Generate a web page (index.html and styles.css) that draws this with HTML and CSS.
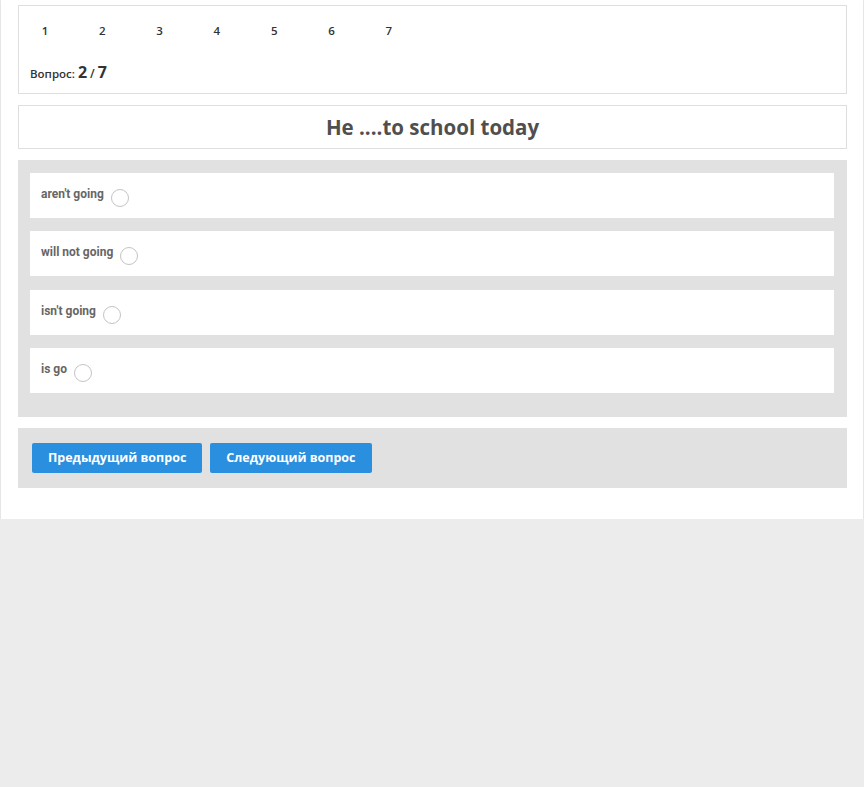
FILE: index.html
```html
<!DOCTYPE html>
<html lang="ru">

<head>
    <meta charset="UTF-8">
    <meta name="viewport" content="width=device-width, initial-scale=1.0">
    <title>Тест</title>
    <link rel="stylesheet" href="styles.css">
</head>

<body>
    <div class="panel">
        <div class="box nav-box">
            <ul class="steps">
                <li>1</li>
                <li>2</li>
                <li>3</li>
                <li>4</li>
                <li>5</li>
                <li>6</li>
                <li>7</li>
            </ul>
            <div class="counter">Вопрос: <b>2</b> <span class="slash">/</span> <b>7</b></div>
        </div>

        <div class="box question">
            <h2>He ....to school today</h2>
        </div>

        <form class="answers">
            <label class="answer">aren't going <input type="radio" name="answer"></label>
            <label class="answer">will not going <input type="radio" name="answer"></label>
            <label class="answer">isn't going <input type="radio" name="answer"></label>
            <label class="answer">is go <input type="radio" name="answer"></label>
        </form>

        <div class="controls">
            <button class="button">Предыдущий вопрос</button>
            <button class="button">Следующий вопрос</button>
        </div>
    </div>
</body>

</html>
```

FILE: styles.css
```css
/* General Page Styles */
body {
    font-family: 'Open Sans', 'Noto Sans', sans-serif;
    background-color: #ececec;
    color: #333;
    margin: 0;
    padding: 0;
}

/* White sheet */
.panel {
    background-color: #fff;
    margin: 0 1px;
    padding: 5px 16px 31px 17px;
    box-shadow: 0 1px 2px rgba(0, 0, 0, 0.08);
}

.box {
    border: 1px solid #dedede;
    background-color: #fff;
}

/* Question numbers */
.nav-box {
    height: 87px;
    margin-bottom: 11px;
}

.steps {
    list-style: none;
    display: flex;
    gap: 5.3px;
    margin: 0;
    padding: 16px 0 0 0;
}

.steps li {
    width: 52px;
    text-align: center;
    font-size: 11.5px;
    font-weight: 600;
    line-height: 18px;
    color: #333;
}

.counter {
    margin: 21px 0 0 11px;
    font-size: 11.5px;
    font-weight: 600;
    color: #333;
}

.counter b {
    font-size: 16px;
    font-weight: 700;
}

.counter .slash {
    font-size: 12px;
}

/* Question title */
.question {
    height: 42px;
    margin-bottom: 11px;
}

.question h2 {
    margin: 0;
    text-align: center;
    font-size: 20.5px;
    line-height: 42px;
    font-weight: 700;
    color: #4f4f4f;
}

/* Answer options */
.answers {
    background-color: #e1e1e1;
    padding: 13px 13px 24px 12px;
    margin-bottom: 11px;
    display: flex;
    flex-direction: column;
    gap: 13.3px;
}

.answer {
    display: block;
    height: 45px;
    box-sizing: border-box;
    background-color: #fff;
    padding: 14px 11px 0;
    font-family: 'Roboto', sans-serif;
    font-size: 12px;
    font-weight: 700;
    color: #666;
}

.answer input[type="radio"] {
    appearance: none;
    -webkit-appearance: none;
    width: 18px;
    height: 18px;
    margin: 0 0 0 4px;
    border: 1px solid #c4c4c4;
    border-radius: 50%;
    background-color: #fff;
    vertical-align: -9px;
}

/* Navigation buttons */
.controls {
    background-color: #e1e1e1;
    height: 60px;
    box-sizing: border-box;
    padding: 15px 14px;
    display: flex;
    gap: 8px;
}

.button {
    height: 30px;
    padding: 0 16px;
    font-family: 'Open Sans', sans-serif;
    font-size: 12.5px;
    font-weight: 700;
    background-color: #2b8fe0;
    border: none;
    color: #fff;
    border-radius: 2px;
    cursor: pointer;
}

.button:hover {
    background-color: #1f7cc8;
}
```
